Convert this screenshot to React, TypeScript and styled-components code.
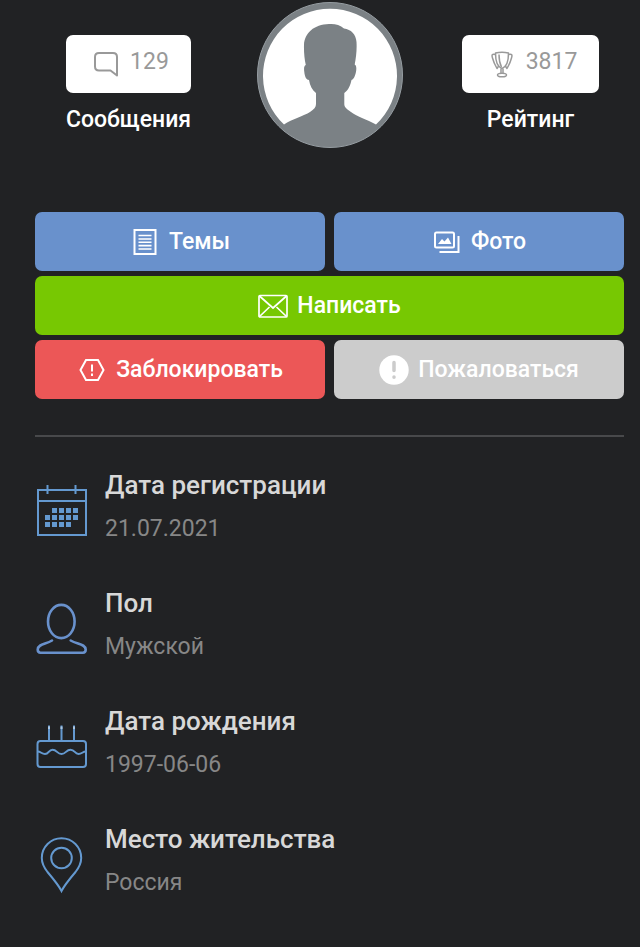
import React from "react";
import styled, { createGlobalStyle } from "styled-components";

const GlobalStyle = createGlobalStyle`
  *, *::before, *::after { box-sizing: border-box; }
  body {
    margin: 0;
    background: #212224;
    font-family: Roboto, "Liberation Sans", sans-serif;
  }
`;

const Page = styled.main`
  padding: 2px 16px 40px 35px;
  color: #fff;
`;

const Header = styled.header`
  display: grid;
  grid-template-columns: repeat(3, 1fr);
  justify-items: center;
  margin: 0 -7px 64px;
`;

const Stat = styled.section`
  display: flex;
  flex-direction: column;
  align-items: center;
  padding-top: 33px;
`;

const StatCard = styled.div`
  display: flex;
  align-items: center;
  gap: 12px;
  height: 58px;
  padding: 0 22px 0 28px;
  border-radius: 7px;
  background: #fff;
  color: #999;
`;

const StatValue = styled.span`
  padding-bottom: 4px;
  font-size: 23px;
  line-height: 24px;
`;

const StatLabel = styled.h2`
  margin: 11px 0 0;
  font-size: 23px;
  font-weight: 500;
  line-height: 32px;
`;

const Avatar = styled.svg`
  display: block;
  width: 146px;
  height: 146px;
`;

const Actions = styled.div`
  display: grid;
  grid-template-columns: 1fr 1fr;
  gap: 5px 9px;
`;

const tones = {
  blue: "#6991cc",
  green: "#77c802",
  red: "#ec5757",
  gray: "#cccccc",
};

const ActionButton = styled.button<{ $tone: keyof typeof tones; $wide?: boolean }>`
  display: flex;
  align-items: center;
  justify-content: center;
  gap: 9px;
  grid-column: ${(p) => (p.$wide ? "1 / -1" : "auto")};
  height: 59px;
  padding: 1px 0 0;
  border: 0;
  border-radius: 7px;
  background: ${(p) => tones[p.$tone]};
  color: #fff;
  font-family: inherit;
  font-size: 23px;
  font-weight: 500;
  line-height: 32px;
  cursor: pointer;
`;

const Divider = styled.hr`
  height: 2px;
  margin: 36px 0 26px;
  border: 0;
  background: #48494b;
`;

const InfoList = styled.ul`
  display: grid;
  gap: 30px;
  margin: 0;
  padding: 0;
  list-style: none;
`;

const InfoRow = styled.li`
  display: grid;
  grid-template-columns: 52px 1fr;
  column-gap: 17px;
  align-items: center;
  padding-left: 1px;
`;

const InfoIcon = styled.svg`
  width: 52px;
  height: 56px;
  margin-top: 8px;
  overflow: visible;
  fill: none;
  stroke: #6499d0;
  stroke-width: 2;
`;

const InfoTitle = styled.h3`
  margin: 0;
  color: #d8d8d8;
  font-size: 26px;
  font-weight: 500;
  line-height: 44px;
`;

const InfoValue = styled.p`
  margin: 0;
  color: #878787;
  font-size: 23px;
  line-height: 44px;
`;

const SmallIcon = ({ children }: { children: React.ReactNode }) => (
  <svg width="24" height="28" viewBox="0 0 24 28" fill="none" stroke="#999" strokeWidth="1.7" strokeLinejoin="round" aria-hidden="true">
    {children}
  </svg>
);

const ButtonIcon = ({ children }: { children: React.ReactNode }) => (
  <svg width="30" height="30" viewBox="0 0 30 30" fill="none" stroke="#fff" strokeWidth="2" aria-hidden="true">
    {children}
  </svg>
);

const dots = [
  [16, 25], [23, 25], [30, 25], [37, 25],
  [9, 32], [16, 32], [23, 32], [30, 32], [37, 32],
  [9, 39], [16, 39], [23, 39], [30, 39],
];

const info = [
  {
    title: "Дата регистрации",
    value: "21.07.2021",
    icon: (
      <>
        <path d="M2 7H50V52H2ZM2 18H50M11.5 2V11M39.5 2V11" />
        {dots.map(([x, y]) => (
          <rect key={`${x}-${y}`} x={x} y={y} width="5" height="5" fill="#6499d0" stroke="none" />
        ))}
      </>
    ),
  },
  {
    title: "Пол",
    value: "Мужской",
    icon: (
      <g stroke="#6991cc" strokeWidth="2.6" strokeLinecap="round">
        <ellipse cx="25.3" cy="20.5" rx="13.3" ry="16.6" />
        <path d="M16 39.5C10 43.5 2 42.5 1.7 48.6Q1.7 51.7 4.5 51.7H47Q49.7 51.7 49.7 48.6C49.4 42.5 41 43.5 34.7 39.5" />
      </g>
    ),
  },
  {
    title: "Дата рождения",
    value: "1997-06-06",
    icon: (
      <>
        <rect x="1.5" y="22" width="48.5" height="26" rx="3" />
        <path d="M1.5 32.5C5 32.5 5.5 35 9 35C13 35 12.5 30.7 16.5 30.7C21 30.7 21 35 25.5 35C30 35 30 30.7 34.5 30.7C39 30.7 38.5 35 42.5 35C46 35 46.5 32.5 50 32.5" />
        <path d="M13 6.5V21.5M25.5 6.5V21.5M38 6.5V21.5" />
        <path d="M13 7.5V10M25.5 7.5V10M38 7.5V10" stroke="#a9c5e2" />
      </>
    ),
  },
  {
    title: "Место жительства",
    value: "Россия",
    icon: (
      <>
        <path d="M25.5 54C23 49 17 41.5 11.5 35C8 30.5 5.8 26 5.8 21A19.7 19.7 0 0 1 45.2 21C45.2 26 43 30.5 39.5 35C34 41.5 28 49 25.5 54Z" />
        <circle cx="25.5" cy="21" r="10.3" />
      </>
    ),
  },
];

export default function App() {
  return (
    <>
      <GlobalStyle />
      <Page>
        <Header>
          <Stat>
            <StatCard>
              <SmallIcon>
                <path strokeWidth="2" d="M5 3H19Q23 3 23 7V25.5L16.5 20.5H5Q1 20.5 1 16.5V7Q1 3 5 3Z" />
              </SmallIcon>
              <StatValue>129</StatValue>
            </StatCard>
            <StatLabel>Сообщения</StatLabel>
          </Stat>
          <Avatar viewBox="0 0 146 146" role="img" aria-label="Аватар">
            <circle cx="73" cy="73" r="72.5" fill="#7b8185" stroke="#969da2" />
            <path
              fill="#fff"
              d="M27 122.5A67 67 0 1 1 119 122.5C110 117.5 99 114 94 110C89 106.5 87.3 105 87.3 102V91C91.5 88 93.5 83 94.5 78C97.5 77.5 99.5 70 99.3 66C99.2 63.5 98.5 63 97.7 62.5C99 56 100 48 99.5 40C99 32 94 27.5 87 26.5C83 22.5 77 21.5 72 22C57 22.5 47.5 31 47 43C46.8 50 47.5 57 48.8 63C47 64 46.8 66 47.3 70C47.8 75 49.5 78 52 78C53 83.5 55 88 59 91V102C59 105 57 107.5 53 110C47 114 35 117 27 122.5Z"
            />
          </Avatar>
          <Stat>
            <StatCard>
              <SmallIcon>
                <g strokeWidth="1.5">
                  <path d="M5.5 3Q12 1.5 18.5 3C18.5 10 17 17 12 18.5C7 17 5.5 10 5.5 3Z" />
                  <path d="M5.5 4.5C2 3.5 1.5 5 2.5 8C3.5 12 5 15 7 18.5L9 15.5M18.5 4.5C22 3.5 22.5 5 21.5 8C20.5 12 19 15 17 18.5L15 15.5" />
                  <path d="M9 4.5Q9 12 11.5 17M11 18.5V23.5M13 18.5V23.5" />
                  <ellipse cx="12" cy="25" rx="4.5" ry="1.8" />
                </g>
              </SmallIcon>
              <StatValue>3817</StatValue>
            </StatCard>
            <StatLabel>Рейтинг</StatLabel>
          </Stat>
        </Header>

        <Actions>
          <ActionButton type="button" $tone="blue">
            <ButtonIcon>
              <rect x="4.5" y="3" width="21" height="24" />
              <path strokeWidth="1.6" d="M8.5 8.5H21.5M8.5 12H21.5M8.5 15.3H21.5M8.5 18.6H21.5M8.5 22H21.5" />
            </ButtonIcon>
            Темы
          </ActionButton>
          <ActionButton type="button" $tone="blue">
            <ButtonIcon>
              <rect x="3" y="5.5" width="19" height="15" rx="1.5" />
              <path d="M26.5 9V25H7.5" />
              <path fill="#fff" stroke="none" d="M6 17L10 12L12.5 14.5L16 10.5L19.5 17Z" />
            </ButtonIcon>
            Фото
          </ActionButton>
          <ActionButton type="button" $tone="green" $wide>
            <ButtonIcon>
              <g strokeWidth="1.7">
                <rect x="1" y="4.5" width="28" height="21.5" rx="1" />
                <path d="M1.5 5L15 17L28.5 5M1.5 25.5L11.5 16M28.5 25.5L18.5 16" />
              </g>
            </ButtonIcon>
            Написать
          </ActionButton>
          <ActionButton type="button" $tone="red">
            <ButtonIcon>
              <path d="M9 5H21L26.5 15L21 25H9L3.5 15Z" />
              <path d="M15 9.5V16.5M15 18.5V21" />
            </ButtonIcon>
            Заблокировать
          </ActionButton>
          <ActionButton type="button" $tone="gray">
            <ButtonIcon>
              <circle cx="15" cy="15" r="14.7" fill="#fff" stroke="none" />
              <path stroke="#ccc" strokeWidth="3.5" strokeLinecap="round" d="M15 7.5V15.5M15 22V22.2" />
            </ButtonIcon>
            Пожаловаться
          </ActionButton>
        </Actions>

        <Divider />

        <InfoList>
          {info.map(({ title, value, icon }) => (
            <InfoRow key={title}>
              <InfoIcon viewBox="0 0 52 56" aria-hidden="true">{icon}</InfoIcon>
              <div>
                <InfoTitle>{title}</InfoTitle>
                <InfoValue>{value}</InfoValue>
              </div>
            </InfoRow>
          ))}
        </InfoList>
      </Page>
    </>
  );
}
